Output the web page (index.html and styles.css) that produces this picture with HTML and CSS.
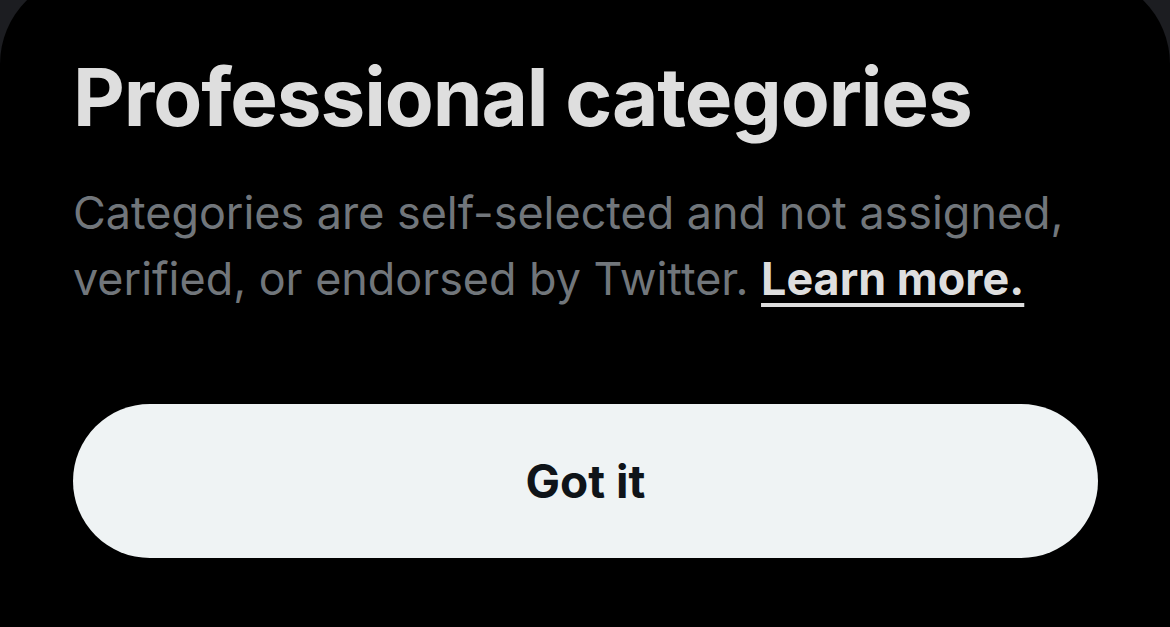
FILE: index.html
```html
<!DOCTYPE html>
<html lang="en">
<head>
<meta charset="utf-8">
<title>Professional categories</title>
<link rel="stylesheet" href="styles.css">
</head>
<body>
<div class="sheet">
  <h1 class="title">Professional categories</h1>
  <p class="desc">Categories are self-selected and not assigned, verified, or endorsed by Twitter. <a class="learn" href="#">Learn more.</a></p>
  <button class="got" type="button">Got it</button>
</div>
</body>
</html>
```
FILE: styles.css
```css
html, body {
  margin: 0;
  padding: 0;
  width: 1170px;
  height: 627px;
  overflow: hidden;
  background: #1c1d21;
  font-family: Inter, "Noto Sans", sans-serif;
}
.sheet {
  margin-top: -25px;
  height: 652px;
  background: #000;
  border-radius: 89px 89px 0 0;
  padding: 0 72px 0 73px;
  box-sizing: border-box;
  display: flex;
  flex-direction: column;
}
.title {
  margin: 72px 0 0 0;
  font-size: 80px;
  line-height: 100px;
  font-weight: 700;
  color: #dedede;
  letter-spacing: -1.1px;
}
.desc {
  margin: 33px 0 0 0;
  font-size: 44.9px;
  line-height: 66px;
  font-weight: 400;
  color: #71767b;
}
.learn {
  color: #dedede;
  font-weight: 700;
  text-decoration: underline;
  text-decoration-thickness: 4px;
  text-underline-offset: 8px;
}
.got {
  margin-top: 92px;
  height: 154px;
  width: 100%;
  flex: none;
  border: none;
  border-radius: 77px;
  background: #eff3f4;
  color: #0f1419;
  font-family: inherit;
  font-size: 46px;
  font-weight: 700;
}
```
